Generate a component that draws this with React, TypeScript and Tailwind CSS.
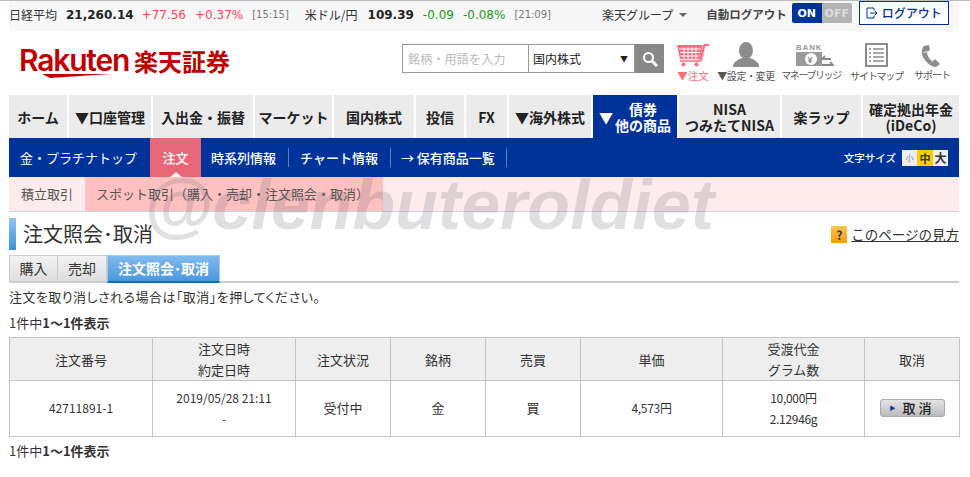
import React from "react";

const jp = "font-['Noto_Sans_CJK_JP','Liberation_Sans',sans-serif]";
const num = "font-['DejaVu_Sans','Noto_Sans_CJK_JP',sans-serif]";
const palt = "[font-feature-settings:'palt']";

const CartIcon = () => (
  <svg width="33" height="26" viewBox="0 0 33 26" fill="none">
    <path d="M0 3h26l-3 14H3z" fill="#ff6b7a" />
    <path d="M2 7h22M3 10.500h20M3.500 14h19M7 5v12M11 5v12M15 5v12M19 5v12" stroke="#fff" strokeWidth="1" />
    <path d="M23.500 19l4-16h4.500" stroke="#ff6b7a" strokeWidth="2" />
    <path d="M3 19h21" stroke="#ff6b7a" strokeWidth="1.500" />
    <circle cx="6.500" cy="22.500" r="2" fill="#ff6b7a" />
    <circle cx="19.500" cy="22.500" r="2" fill="#ff6b7a" />
  </svg>
);

const PersonIcon = () => (
  <svg width="26" height="25" viewBox="0 0 26 25" fill="#8c8c8c">
    <ellipse cx="13" cy="8.500" rx="7" ry="8.500" />
    <path d="M0 25c0-5 4-7 9-9h8c5 2 9 4 9 9z" />
  </svg>
);

const BankIcon = () => (
  <svg width="38" height="26" viewBox="0 0 38 26">
    <text x="0" y="7.500" fontSize="8" fontWeight="700" fill="#999" fontFamily="Liberation Sans, sans-serif" letterSpacing="0.8">
      BANK
    </text>
    <rect x="0" y="10" width="26" height="14" fill="#999" />
    <circle cx="15" cy="17" r="6" fill="#fff" />
    <text x="11.500" y="20.500" fontSize="9" fontWeight="700" fill="#888" fontFamily="Liberation Sans, sans-serif">
      ¥
    </text>
    <path d="M35 17h-9l3-3" stroke="#888" strokeWidth="1.800" fill="none" />
    <path d="M26 23h11l-3-3" stroke="#888" strokeWidth="1.800" fill="none" />
  </svg>
);

const MapIcon = () => (
  <svg width="23" height="24" viewBox="0 0 23 24" fill="none" stroke="#8c8c8c">
    <rect x="1" y="1" width="21" height="22" strokeWidth="2" />
    <path d="M4 6h2M8 6h11M4 10h2M8 10h11M4 14h2M8 14h11M4 18h2M8 18h11" strokeWidth="1.500" />
  </svg>
);

const PhoneIcon = () => (
  <svg width="20" height="25" viewBox="0 0 20 25" fill="#8c8c8c">
    <path d="M8 2L3 3C0 6 0 12 4 17c3 4 7 7 11 7l4-3-5-5-3 2c-3-2-5-6-5-9l3-2z" />
    <path d="M2.500 9.500l4-1M10.500 19l3.500-3" stroke="#fff" strokeWidth="0.800" />
  </svg>
);

const navItems = [
  { w: "w-[58px]", label: "ホーム" },
  { w: "w-[82px]", label: "▼口座管理" },
  { w: "w-[100px]", label: "入出金・振替" },
  { w: "w-[77px]", label: "マーケット" },
  { w: "w-[80px]", label: "国内株式" },
  { w: "w-[48px]", label: "投信" },
  { w: "w-[41px]", label: "FX" },
  { w: "w-[82px]", label: "▼海外株式" },
];

const App = () => {
  return (
    <div className={`relative w-[970px] h-[477px] overflow-hidden bg-white text-[#333] border-t border-[#bbb] ${jp}`}>
      {/* top bar */}
      <div className="mx-[9px] w-[950px] h-[30px] pb-[2px] bg-[#f7f7f7] flex items-center text-[12px] leading-none">
        <span className="text-[#333]">日経平均</span>
        <b className={`ml-[9px] text-[#222] ${num}`}>21,260.14</b>
        <span className={`ml-[8px] text-[#ff4455] ${num}`}>+77.56</span>
        <span className={`ml-[9px] text-[#ff4455] ${num}`}>+0.37%</span>
        <span className={`ml-[9px] text-[10px] text-[#777] ${num}`}>[15:15]</span>
        <span className="ml-[16px]">米ドル/円</span>
        <b className={`ml-[10px] text-[#222] ${num}`}>109.39</b>
        <span className={`ml-[9px] text-[#229922] ${num}`}>-0.09</span>
        <span className={`ml-[9px] text-[#229922] ${num}`}>-0.08%</span>
        <span className={`ml-[9px] text-[10px] text-[#777] ${num}`}>[21:09]</span>
        <span className="ml-[51px]">楽天グループ</span>
        <span className="ml-[6px] w-0 h-0 border-x-[4px] border-x-transparent border-t-[4px] border-t-[#666]" />
        <b className="ml-[19px] text-[11.5px] text-[#444]">自動ログアウト</b>
        <div className="ml-[5px] flex w-[60px] h-[20px] text-[11px] font-bold rounded-[2px] overflow-hidden -mt-[4px]">
          <span className={`w-[30px] bg-[#003399] text-white flex items-center justify-center ${num}`}>ON</span>
          <span className={`w-[30px] bg-[#b3b3b3] text-[#ddd] flex items-center justify-center ${num}`}>OFF</span>
        </div>
        <div className="ml-[7px] w-[90px] h-[24px] -mt-[4px] border border-[#003399] bg-white flex items-center justify-center gap-[5px] text-[#003399] font-medium text-[12px]">
          <svg width="11" height="12" viewBox="0 0 11 12" fill="none" stroke="#003399">
            <path d="M8 3V1H1v10h7V9M4 6h7M8.500 3.500L11 6 8.500 8.500" />
          </svg>
          ログアウト
        </div>
      </div>

      {/* logo and search */}
      <div className="mx-[9px] w-[950px] h-[64px] relative flex">
        <div className="ml-[10px] mt-[13px] w-[221px] shrink-0 flex items-start">
          <div className="relative w-[108px] shrink-0">
            <span className="font-['Inter',sans-serif] font-semibold text-[30px] leading-[32px] tracking-[-1.200px] text-[#bf0000]">Rakuten</span>
            <span className="absolute left-[23px] top-[30px] w-[68px] h-[4px] bg-[#bf0000] [clip-path:polygon(0_0,100%_0,12%_100%)]" />
          </div>
          <span className="ml-[7px] mt-[2px] font-bold text-[24px] leading-[30px] text-[#bf0000] whitespace-nowrap">楽天証券</span>
        </div>
        <div className="ml-[162px] mt-[13px] flex h-[29px] items-start">
          <div className="w-[127px] h-[29px] border border-[#999] flex items-center px-[5px] text-[12px] text-[#bbb] tracking-[0.2px]">銘柄・用語を入力</div>
          <div className="w-[106px] h-[29px] border border-l-0 border-[#999] flex items-center justify-between pl-[4px] pr-[6px] text-[12px] text-[#222]">
            国内株式<span className="text-[8px]">▼</span>
          </div>
          <div className="w-[29px] h-[29px] bg-[#888] flex items-center justify-center">
            <svg width="16" height="16" viewBox="0 0 16 16" fill="none" stroke="#fff">
              <circle cx="6.500" cy="6.500" r="4.500" strokeWidth="2" />
              <path d="M10 10l5 5" strokeWidth="3" />
            </svg>
          </div>
          <div className="ml-[9px] w-[40px] flex flex-col items-center -mt-[2px]">
            <CartIcon />
            <span className="mt-[2px] text-[10.5px] leading-[12px] text-[#ff6b7a] whitespace-nowrap">▼注文</span>
          </div>
          <div className="ml-[3px] w-[60px] flex flex-col items-center -mt-[2px]">
            <PersonIcon />
            <span className="mt-[3px] text-[10px] leading-[12px] tracking-[-0.4px] text-[#555] whitespace-nowrap">▼設定・変更</span>
          </div>
          <div className="ml-[5px] w-[60px] flex flex-col items-center -mt-[2px]">
            <span className="ml-[8px]"><BankIcon /></span>
            <span className="mt-[1px] text-[10px] leading-[12px] tracking-[-1.4px] text-[#555] whitespace-nowrap">マネーブリッジ</span>
          </div>
          <div className="ml-[9px] w-[53px] flex flex-col items-center -mt-[2px]">
            <span className="mt-[1px]"><MapIcon /></span>
            <span className="mt-[3px] text-[10px] leading-[12px] tracking-[-1.2px] text-[#555] whitespace-nowrap">サイトマップ</span>
          </div>
          <div className="ml-[11px] w-[36px] flex flex-col items-center -mt-[2px]">
            <span className="-ml-[3px] mt-[1px]"><PhoneIcon /></span>
            <span className="mt-[1px] text-[10px] leading-[12px] tracking-[-1px] text-[#555] whitespace-nowrap">サポート</span>
          </div>
        </div>
      </div>

      {/* main nav */}
      <div className="mx-[9px] w-[950px] h-[43px] flex gap-[2px] text-[14px] font-bold text-[#222] leading-[16px] text-center">
        {navItems.map((n) => (
          <div key={n.label} className={`${n.w} bg-[#ebebeb] flex items-center justify-center whitespace-nowrap`}>
            {n.label}
          </div>
        ))}
        <div className="w-[84px] bg-[#003399] text-white flex items-center justify-center">
          <span className="text-[14px] mr-[2px]">▼</span>
          <span>債券<br />他の商品</span>
        </div>
        <div className="w-[101px] bg-[#ebebeb] flex items-center justify-center whitespace-nowrap">
          <span>NISA<br />つみたてNISA</span>
        </div>
        <div className="w-[79px] bg-[#ebebeb] flex items-center justify-center">楽ラップ</div>
        <div className="w-[96px] bg-[#ebebeb] flex items-center justify-center whitespace-nowrap">
          <span>確定拠出年金<br />(iDeCo)</span>
        </div>
      </div>

      {/* sub nav */}
      <div className="mx-[9px] w-[950px] h-[39px] bg-[#003399] flex items-center text-[13px] text-white">
        <span className="ml-[11px] w-[130px]">金・プラチナトップ</span>
        <div className="relative w-[51px] h-full bg-[#e8687a] flex items-center justify-center font-medium">
          注文
          <span className="absolute bottom-0 left-[20px] w-0 h-0 border-x-[6px] border-x-transparent border-b-[5px] border-b-[#fdeceb]" />
        </div>
        <span className="ml-[10px] font-medium">時系列情報</span>
        <span className="ml-[12px] w-px h-[19px] bg-[#5b7fc4]" />
        <span className="ml-[11px] font-medium">チャート情報</span>
        <span className="ml-[12px] w-px h-[19px] bg-[#5b7fc4]" />
        <span className="ml-[10px] font-medium">→ 保有商品一覧</span>
        <span className="ml-[11px] w-px h-[19px] bg-[#5b7fc4]" />
        <span className="ml-auto text-[10.5px] font-medium">文字サイズ</span>
        <div className="ml-[6px] mr-[11px] flex h-[16px] text-center text-[11px] leading-[16px] font-bold">
          <span className="w-[15px] bg-[#eee] text-[#888] text-[8px] font-normal">小</span>
          <span className="w-[16px] bg-[#ffcc00] text-[#333]">中</span>
          <span className="w-[15px] bg-[#eee] text-[#333] text-[12px]">大</span>
        </div>
      </div>

      {/* third nav */}
      <div className="mx-[9px] w-[950px] h-[35px] bg-[#fdeceb] border-b border-[#c8d8ea] flex text-[13px] text-[#555]">
        <div className="w-[76px] flex items-center justify-center">積立取引</div>
        <div className="w-[298px] bg-[#ffc0c0] flex items-center pl-[11px] whitespace-nowrap">スポット取引（購入・売却・注文照会・取消）</div>
      </div>

      {/* title */}
      <div className="mx-[9px] w-[950px] mt-[6px] h-[32px] flex items-center">
        <span className="w-[7px] h-[32px] bg-gradient-to-b from-[#90c6f0] to-[#3d8fd8]" />
        <h1 className="ml-[7px] text-[20px] font-normal text-[#333]">注文照会･取消</h1>
        <div className="ml-auto flex items-center text-[13.5px] text-[#333]">
          <span className="w-[16px] h-[17px] mr-[4px] bg-gradient-to-b from-[#ffc34d] to-[#f59a00] text-[#333] text-[12px] leading-[17px] text-center font-bold">?</span>
          <span className="underline">このページの見方</span>
        </div>
      </div>

      {/* tabs */}
      <div className="mx-[9px] w-[950px] mt-[5px] h-[28px] border-b-2 border-[#ccc] flex text-[14px] text-[#333] box-border">
        <div className="w-[49px] bg-gradient-to-b from-[#f2f2f2] to-[#dedede] border border-b-0 border-[#ccc] flex items-center justify-center">購入</div>
        <div className="w-[50px] -ml-px bg-gradient-to-b from-[#f2f2f2] to-[#dedede] border border-b-0 border-[#ccc] flex items-center justify-center">売却</div>
        <div className="w-[113px] bg-gradient-to-b from-[#80bbee] to-[#4b97dd] border-t border-x border-[#a5cbe8] border-b-2 border-b-[#0a6fc2] -mb-[2px] text-white font-bold flex items-center justify-center whitespace-nowrap">注文照会･取消</div>
      </div>

      {/* messages */}
      <p className={`mx-[9px] mt-[4px] text-[13px] leading-[20px] tracking-[0.45px] text-[#333] ${palt}`}>注文を取り消しされる場合は「取消」を押してください。</p>
      <p className={`mx-[9px] mt-[7px] text-[13px] leading-[18px] text-[#333] ${palt}`}>1件中<b>1〜1件表示</b></p>

      {/* table */}
      <table className="mx-[9px] mt-[5px] w-[950px] table-fixed border-collapse text-[13px] leading-[21px] text-center text-[#333]">
        <colgroup>
          <col className="w-[143px]" />
          <col className="w-[143px]" />
          <col className="w-[95px]" />
          <col className="w-[95px]" />
          <col className="w-[95px]" />
          <col className="w-[142px]" />
          <col className="w-[142px]" />
          <col className="w-[95px]" />
        </colgroup>
        <thead>
          <tr className="h-[42px] bg-[#eeeeee]">
            {["注文番号", "注文日時|約定日時", "注文状況", "銘柄", "売買", "単価", "受渡代金|グラム数", "取消"].map((h) => (
              <th key={h} className="border border-[#c4c4c4] font-normal p-0">
                {h.split("|").map((t) => (
                  <div key={t}>{t}</div>
                ))}
              </th>
            ))}
          </tr>
        </thead>
        <tbody>
          <tr className="h-[56px]">
            <td className="border border-[#c4c4c4] pb-[2px] text-[12px]">42711891-1</td>
            <td className="border border-[#c4c4c4] pb-[2px] text-[12px]">2019/05/28 21:11<br />-</td>
            <td className="border border-[#c4c4c4] pb-[2px]">受付中</td>
            <td className="border border-[#c4c4c4] pb-[2px]">金</td>
            <td className="border border-[#c4c4c4] pb-[2px]">買</td>
            <td className="border border-[#c4c4c4] pb-[2px] text-[12px] tracking-[-0.3px]">4,573円</td>
            <td className="border border-[#c4c4c4] pb-[2px] text-[12px] tracking-[-0.3px]">10,000円<br />2.12946g</td>
            <td className="border border-[#c4c4c4] pb-[2px]">
              <div className="mx-auto w-[65px] h-[18px] rounded-[3px] border border-[#aaa] bg-gradient-to-b from-[#e4e4e4] to-[#bbb] flex items-center justify-center text-[13px] text-[#222] font-medium tracking-[3px]">
                <span className="text-[6px] text-[#003399] mr-[4px]">▶</span>取消
              </div>
            </td>
          </tr>
        </tbody>
      </table>

      <p className={`mx-[9px] mt-[5px] text-[13px] leading-[18px] text-[#333] ${palt}`}>1件中<b>1〜1件表示</b></p>

      {/* watermark */}
      <div className="absolute left-[144px] top-[164px] text-[70px] leading-[80px] italic font-bold text-[#666672]/20 font-['Liberation_Sans',sans-serif] whitespace-nowrap pointer-events-none">
        @clenbuteroldiet
      </div>
    </div>
  );
};

export default App;
